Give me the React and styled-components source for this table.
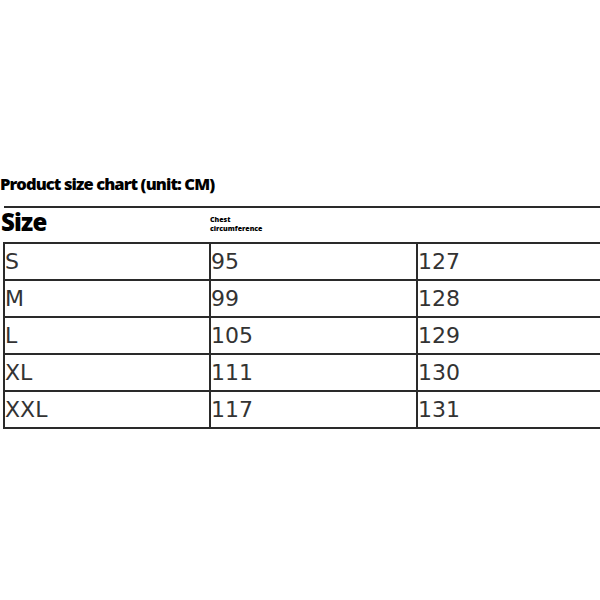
import React from 'react';
import styled, { createGlobalStyle } from 'styled-components';

const GlobalStyle = createGlobalStyle`
  html, body {
    margin: 0;
    padding: 0;
    background: #fff;
  }
`;

const Page = styled.div`
  width: 600px;
  height: 600px;
  padding-top: 172px;
  box-sizing: border-box;
  overflow: hidden;
`;

const Title = styled.h2`
  margin: 0;
  height: 34px;
  font-family: "Open Sans", sans-serif;
  font-weight: 800;
  font-size: 16.5px;
  letter-spacing: -0.9px;
  line-height: 24px;
  color: #000;
`;

const Table = styled.table`
  width: 597px;
  margin-left: 3px;
  border-collapse: collapse;
  table-layout: fixed;
`;

const HeadRow = styled.tr`
  height: 36px;
  border-top: 2px solid #2a2a2a;
  border-bottom: 2px solid #2a2a2a;
`;

const HeadCell = styled.th`
  padding: 0;
  text-align: left;
  vertical-align: top;
  font-family: "Open Sans", sans-serif;
  font-weight: 800;
  color: #000;
  font-size: ${(p) => (p.$small ? '7px' : '24px')};
  line-height: ${(p) => (p.$small ? '9px' : '28px')};
  padding-top: ${(p) => (p.$small ? '7px' : '0')};
  text-indent: ${(p) => (p.$small ? '0' : '-3px')};
  letter-spacing: ${(p) => (p.$small ? '0' : '-0.8px')};
`;

const Row = styled.tr`
  height: 37px;
  border-bottom: 2px solid #2a2a2a;
`;

const Cell = styled.td`
  padding: 0;
  border-left: 2px solid #2a2a2a;
  font-family: "DejaVu Sans", Verdana, sans-serif;
  font-size: 22px;
  color: #333;
  vertical-align: middle;
  line-height: 26px;
`;

const rows = [
  ['S', '95', '127'],
  ['M', '99', '128'],
  ['L', '105', '129'],
  ['XL', '111', '130'],
  ['XXL', '117', '131'],
];

export default function App() {
  return (
    <>
      <GlobalStyle />
      <Page>
        <Title>Product size chart (unit: CM)</Title>
        <Table>
          <colgroup>
            <col style={{ width: '206px' }} />
            <col style={{ width: '207px' }} />
            <col style={{ width: '184px' }} />
          </colgroup>
          <thead>
            <HeadRow>
              <HeadCell>Size</HeadCell>
              <HeadCell $small>
                Chest
                <br />
                circumference
              </HeadCell>
              <HeadCell />
            </HeadRow>
          </thead>
          <tbody>
            {rows.map((r) => (
              <Row key={r[0]}>
                {r.map((v, i) => (
                  <Cell key={i}>{v}</Cell>
                ))}
              </Row>
            ))}
          </tbody>
        </Table>
      </Page>
    </>
  );
}
